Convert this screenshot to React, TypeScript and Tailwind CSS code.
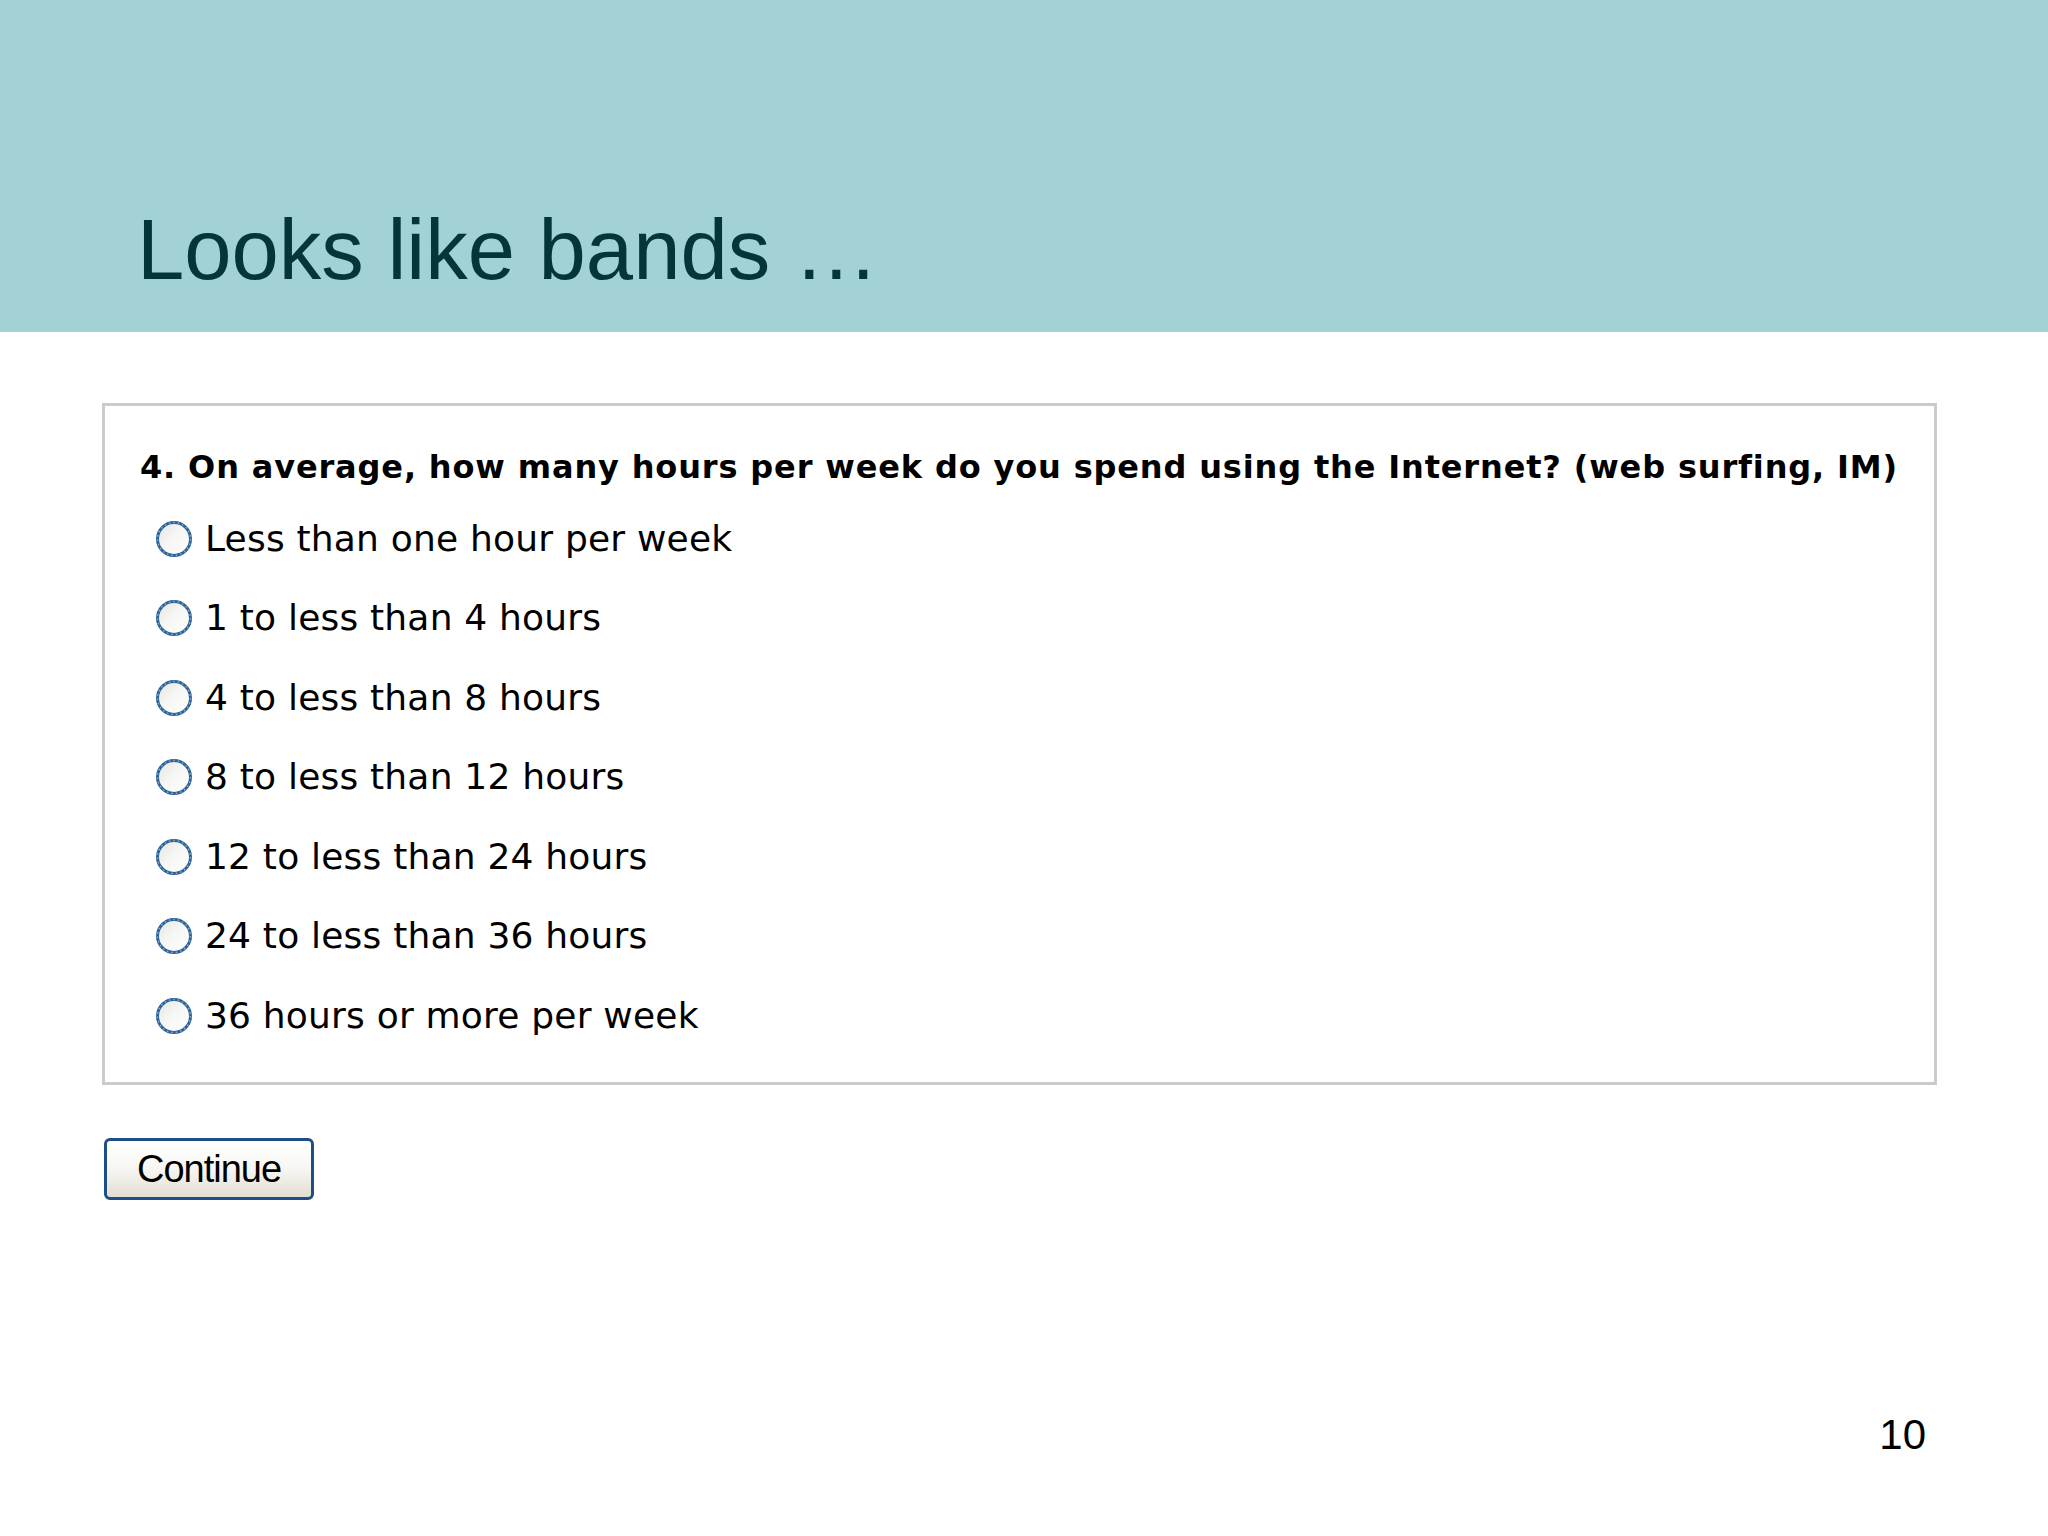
const options = [
  "Less than one hour per week",
  "1 to less than 4 hours",
  "4 to less than 8 hours",
  "8 to less than 12 hours",
  "12 to less than 24 hours",
  "24 to less than 36 hours",
  "36 hours or more per week",
];

const RadioDot = () => (
  <svg width="38" height="38" viewBox="0 0 38 38" className="shrink-0">
    <defs>
      <linearGradient id="radioFill" x1="0" y1="0" x2="1" y2="1">
        <stop offset="0%" stopColor="#e2e2de" />
        <stop offset="45%" stopColor="#f6f6f4" />
        <stop offset="100%" stopColor="#ffffff" />
      </linearGradient>
    </defs>
    <circle cx="19" cy="19" r="16.5" fill="url(#radioFill)" stroke="#2e6399" strokeWidth="3" />
    <circle cx="19" cy="19" r="16.5" fill="none" stroke="#8fb1d2" strokeWidth="1.4" strokeDasharray="1.5 3" />
  </svg>
);

export default function App() {
  return (
    <div className="flex h-[1536px] w-[2048px] flex-col bg-white font-['Liberation_Sans',Arial,sans-serif]">
      <header className="flex h-[332px] shrink-0 flex-col justify-end bg-[#a3d2d6] pb-[40px] pl-[137px]">
        <h1 className="text-[85px] leading-none text-[#043537]">Looks like bands …</h1>
      </header>

      <main className="flex flex-col px-[102px] pt-[71px]">
        <section className="flex h-[682px] w-[1835px] flex-col border-[3px] border-[#cbcbcb] pl-[35px] pt-[45px]">
          <p className="font-['DejaVu_Sans',Verdana,sans-serif] text-[32px] font-bold leading-none tracking-[0.85px] text-black">
            4. On average, how many hours per week do you spend using the Internet? (web surfing, IM)
          </p>
          <div className="mt-[16px] flex flex-col pl-[15px]">
            {options.map((label) => (
              <label key={label} className="flex h-[79.5px] items-center gap-[12px]">
                <RadioDot />
                <span className="font-['DejaVu_Sans',Verdana,sans-serif] text-[36px] leading-none tracking-[0.2px] text-black">
                  {label}
                </span>
              </label>
            ))}
          </div>
        </section>

        <div className="mt-[53px] pl-[2px]">
          <button className="flex h-[62px] w-[210px] items-center justify-center rounded-[6px] border-[3px] border-[#1d4f86] bg-gradient-to-b from-white via-[#f7f6f2] to-[#e2ded3] text-[38px] leading-none tracking-[-1px] text-black">
            Continue
          </button>
        </div>
      </main>

      <div className="flex-1" />
      <footer className="flex justify-end pb-[80px] pr-[122px]">
        <span className="text-[42px] leading-none text-black">10</span>
      </footer>
    </div>
  );
}
